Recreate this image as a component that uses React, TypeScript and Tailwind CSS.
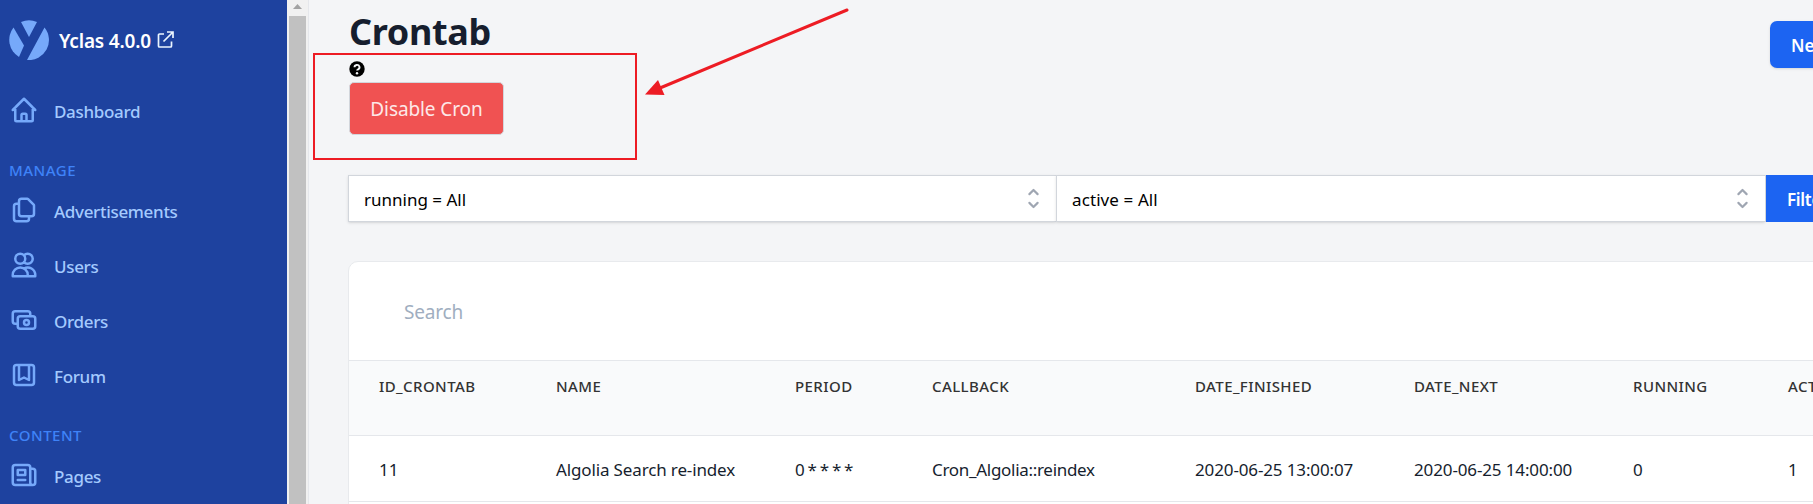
import React from 'react';

const F = "font-['Noto_Sans','Open_Sans',sans-serif]";

type NavProps = { d: string; label: string };

function NavItem({ d, label }: NavProps) {
  return (
    <a className="flex h-[55px] items-center">
      <span className="flex w-[45px] shrink-0 pb-[1px] text-[#76a9fa]">
        <svg width="30" height="30" viewBox="0 0 24 24" fill="none" stroke="currentColor" strokeWidth="2" strokeLinecap="round" strokeLinejoin="round">
          <path d={d} />
        </svg>
      </span>
      <span className="whitespace-nowrap pt-[2px] text-[17px] font-[550] tracking-[-0.32px] text-[#a4cafe]">{label}</span>
    </a>
  );
}

const icons = {
  home: 'M3 12l9-9 9 9M5 10v10a1 1 0 001 1h12a1 1 0 001-1V10M10 21v-5a1 1 0 011-1h2a1 1 0 011 1v5',
  copy: 'M8 7v8a2 2 0 002 2h8a2 2 0 002-2V8.414a1 1 0 00-.293-.707l-4.414-4.414A1 1 0 0014.586 3H10a2 2 0 00-2 2v2zM8 7H6a2 2 0 00-2 2v10a2 2 0 002 2h8a2 2 0 002-2v-2',
  users: 'M12 4.354a4 4 0 110 5.292M15 21H3v-1a6 6 0 0112 0v1zm0 0h6v-1a6 6 0 00-9-5.197M13 7a4 4 0 11-8 0 4 4 0 018 0z',
  money: 'M17 9V7a2 2 0 00-2-2H5a2 2 0 00-2 2v6a2 2 0 002 2h2m2 4h10a2 2 0 002-2v-6a2 2 0 00-2-2H9a2 2 0 00-2 2v6a2 2 0 002 2zm7-5a2 2 0 11-4 0 2 2 0 014 0z',
  forum: 'M16 4v12l-4-2-4 2V4M6 20h12a2 2 0 002-2V6a2 2 0 00-2-2H6a2 2 0 00-2 2v12a2 2 0 002 2z',
  news: 'M19 20H5a2 2 0 01-2-2V6a2 2 0 012-2h10a2 2 0 012 2v1m2 13a2 2 0 01-2-2V7m2 13a2 2 0 002-2V9a2 2 0 00-2-2h-2m-4-3H9M7 16h6M7 8h6v4H7V8z',
};

function SectionLabel({ children }: { children: React.ReactNode }) {
  return <div className="mt-[22px] h-[23px] text-[15px] font-medium leading-[20px] tracking-[0.5px] text-[#3f83f8]">{children}</div>;
}

function Select({ label, width, tracking }: { label: string; width: string; tracking: string }) {
  return (
    <div className={`flex h-[47px] shrink-0 items-center justify-between border border-r-0 border-[#d2d6dc] bg-white pl-[15px] pr-[10px] shadow-sm ${width}`}>
      <span className={`pt-[2px] text-[17px] text-black ${tracking}`}>{label}</span>
      <svg width="25" height="25" viewBox="0 0 20 20" fill="none" stroke="#9fa6b2" strokeWidth="1.7" strokeLinecap="round" strokeLinejoin="round">
        <path d="M6.700 6.500l3.300-3.300 3.300 3.300m0 7l-3.300 3.300-3.300-3.300" />
      </svg>
    </div>
  );
}

const cols = [
  { w: 'w-[177px]', h: 'ID_CRONTAB', v: '11', t: 'tracking-[0px]' },
  { w: 'w-[239px]', h: 'NAME', v: 'Algolia Search re-index', t: 'tracking-[-0.14px]' },
  { w: 'w-[137px]', h: 'PERIOD', v: '0 * * * *', t: 'tracking-[-0.8px]' },
  { w: 'w-[263px]', h: 'CALLBACK', v: 'Cron_Algolia::reindex', t: 'tracking-[-0.3px]' },
  { w: 'w-[219px]', h: 'DATE_FINISHED', v: '2020-06-25 13:00:07', t: 'tracking-[-0.13px]' },
  { w: 'w-[219px]', h: 'DATE_NEXT', v: '2020-06-25 14:00:00', t: 'tracking-[-0.13px]' },
  { w: 'w-[155px]', h: 'RUNNING', v: '0', t: 'tracking-[0px]' },
  { w: 'w-[155px]', h: 'ACTIVE', v: '1', t: 'tracking-[0px]' },
];

export default function App() {
  return (
    <div className={`relative flex h-[504px] w-[1813px] overflow-hidden bg-[#f4f5f7] ${F}`}>
      <aside className="flex w-[287px] shrink-0 flex-col bg-[#1e429f] pl-[9px]">
        <div className="mt-[20px] flex h-[40px] items-center">
          <svg width="40" height="40" viewBox="0 0 40 40" fill="#76a9fa">
            <path d="M12 2a20 20 0 0 1 16 0L20 17z" />
            <path d="M4.500 7.500L15 25.500l-5 11.500A20 20 0 0 1 4.500 7.500z" />
            <path d="M35.500 7.500A20 20 0 0 1 18 40z" />
          </svg>
          <span className="ml-[10px] whitespace-nowrap pt-[2px] text-[19px] font-semibold tracking-[-0.17px] text-white">Yclas 4.0.0</span>
          <svg className="ml-[6px]" width="18" height="18" viewBox="0 0 18 18" fill="none" stroke="#ebf5ff" strokeWidth="1.700">
            <path d="M7 3H2.500a1 1 0 0 0-1 1v11a1 1 0 0 0 1 1h11a1 1 0 0 0 1-1v-4.500M10 1h6v6M16 1L6.500 10.500" />
          </svg>
        </div>
        <nav className="mt-[23px] flex flex-col">
          <NavItem d={icons.home} label="Dashboard" />
          <SectionLabel>MANAGE</SectionLabel>
          <NavItem d={icons.copy} label="Advertisements" />
          <NavItem d={icons.users} label="Users" />
          <NavItem d={icons.money} label="Orders" />
          <NavItem d={icons.forum} label="Forum" />
          <SectionLabel>CONTENT</SectionLabel>
          <NavItem d={icons.news} label="Pages" />
        </nav>
      </aside>
      <div className="flex w-[22px] shrink-0 flex-col border-r border-[#e5e7eb] bg-[#f1f1f1] pl-[2px]">
        <svg width="17" height="16" viewBox="0 0 17 16"><path d="M4 9l4.500-5L13 9z" fill="#a3a3a3" /></svg>
        <div className="w-[17px] flex-1 bg-[#c1c1c1]" />
      </div>
      <main className="flex w-[1504px] shrink-0 flex-col pl-[39px]">
        <div className="flex h-[175px] shrink-0 justify-between">
          <div className="pl-[1px]">
            <h1 className="mt-[9px] h-[45px] text-[36px] font-bold leading-[46px] tracking-[-0.35px] text-[#161e2e]">Crontab</h1>
            <svg className="mt-[7px]" width="16" height="16" viewBox="0 0 16 16">
              <circle cx="8" cy="8" r="7.700" fill="#000" />
              <path d="M5.500 6.300a2.500 2.300 0 1 1 3.600 2c-.8.400-1 .7-1 1.300" fill="none" stroke="#f4f5f7" strokeWidth="1.900" />
              <circle cx="8" cy="12.200" r="1.200" fill="#f4f5f7" />
            </svg>
            <button className="mt-[5px] h-[53px] w-[155px] rounded-[5px] border border-[#d2d6dc] bg-[#f05252] pt-[2px] text-[19px] tracking-[-0.1px] text-[#fde8e8]">Disable Cron</button>
          </div>
          <button className="mr-[-40px] mt-[21px] h-[47px] w-[83px] whitespace-nowrap rounded-[7px] bg-[#1c64f2] pl-[21px] pt-[2px] text-left text-[17px] font-semibold text-white shadow-sm">New</button>
        </div>
        <div className="flex w-[1540px] shrink-0">
          <Select label="running = All" width="w-[708px]" tracking="tracking-[0px]" />
          <Select label="active = All" width="w-[709px]" tracking="tracking-[0.1px]" />
          <button className="h-[47px] w-[100px] border-l border-[#d2d6dc] bg-[#1c64f2] pl-[21px] pt-[2px] text-left text-[17px] font-semibold tracking-[-0.3px] text-white">Filter</button>
        </div>
        <section className="mt-[39px] flex h-[280px] w-[1600px] shrink-0 flex-col rounded-[10px] border border-[#e8eaed] bg-white">
          <div className="flex h-[98px] shrink-0 items-center pl-[55px] pt-[2px] text-[19px] text-[#a0aec0]"><span className="tracking-[-0.2px]">Search</span></div>
          <div className="flex h-[76px] shrink-0 border-y border-[#e5e7eb] bg-[#f9fafb] pl-[30px] pt-[15px]">
            {cols.map((c) => (
              <div key={c.h} className={`${c.w} shrink-0 whitespace-nowrap text-[15px] font-medium leading-[20px] tracking-[0.42px] text-[#333]`}>{c.h}</div>
            ))}
          </div>
          <div className="flex h-[66px] shrink-0 items-center border-b border-[#e5e7eb] pl-[30px] pt-[2px]">
            {cols.map((c) => (
              <div key={c.h} className={`${c.w} ${c.t} shrink-0 whitespace-nowrap text-[17px] text-[#161e2e]`}>{c.v}</div>
            ))}
          </div>
        </section>
      </main>
      <svg className="pointer-events-none absolute left-0 top-0" width="1813" height="504" viewBox="0 0 1813 504" fill="none">
        <rect x="314" y="54" width="322" height="105" stroke="#ed1c24" strokeWidth="2" />
        <path d="M847 10L660 88" stroke="#ed1c24" strokeWidth="3" strokeLinecap="round" />
        <path d="M645 94.500L658 80l6.500 15z" fill="#ed1c24" />
      </svg>
    </div>
  );
}
